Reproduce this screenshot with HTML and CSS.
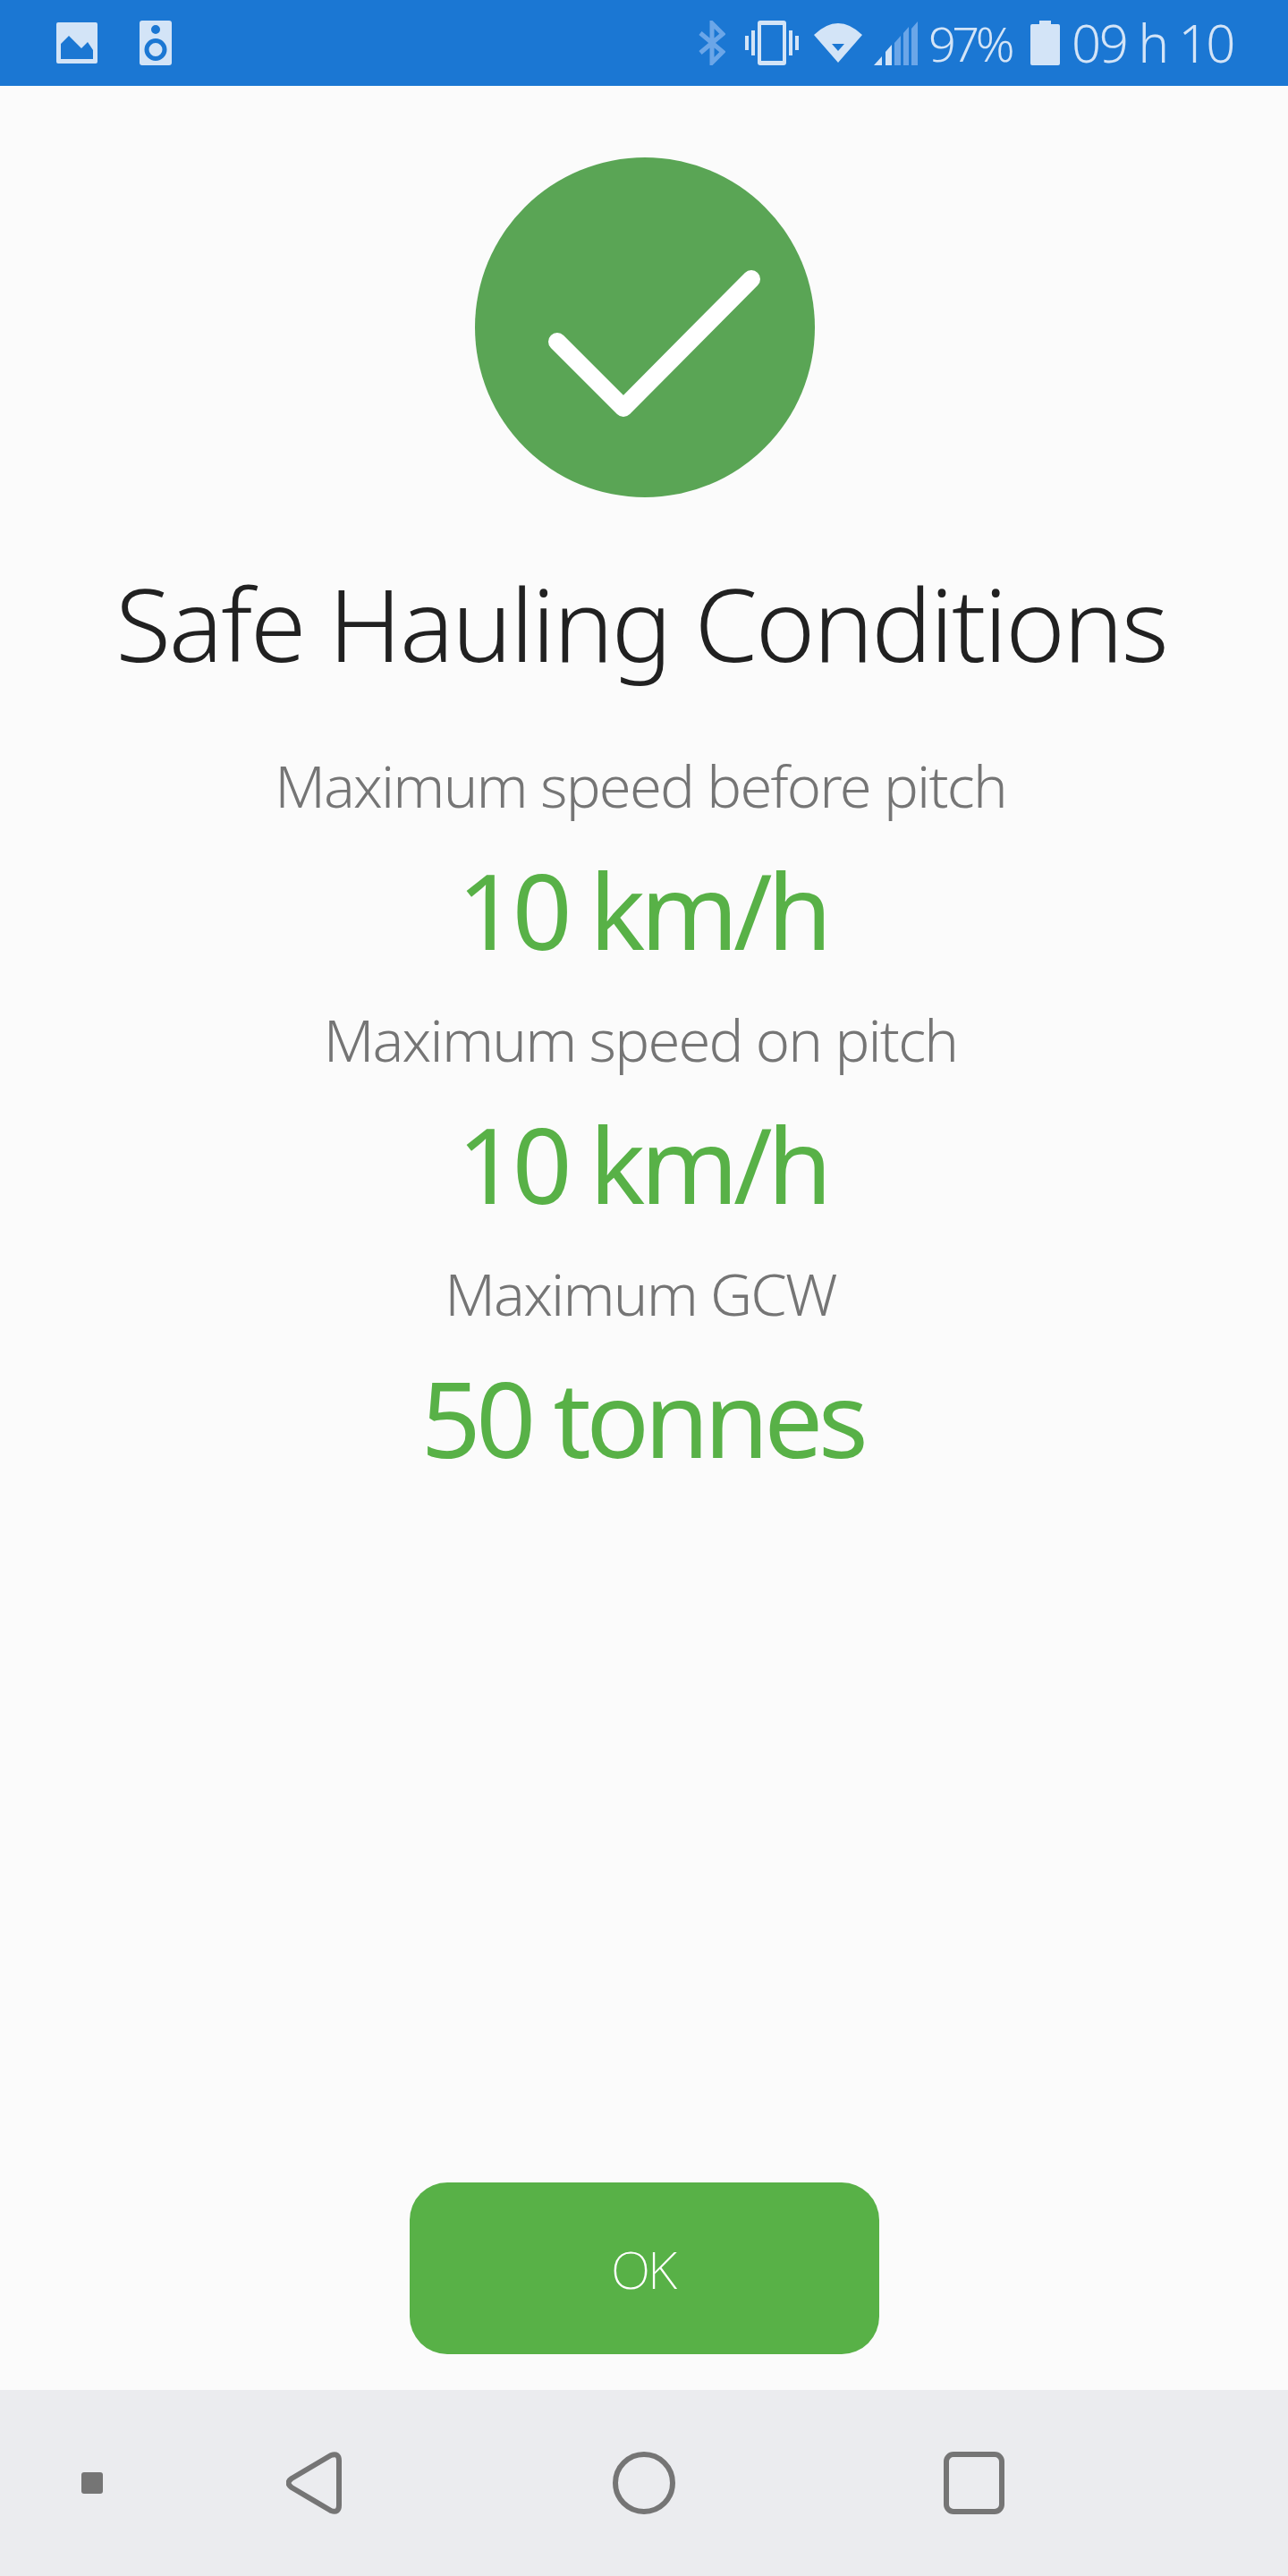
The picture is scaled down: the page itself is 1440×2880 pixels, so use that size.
FILE: index.html
```html
<!DOCTYPE html>
<html lang="en">
<head>
<meta charset="utf-8">
<title>Safe Hauling Conditions</title>
<link rel="stylesheet" href="styles.css">
</head>
<body>
<div class="screen">
  <header class="status">
    <div class="status-left">
      <svg class="i-image" width="46" height="46" viewBox="0 0 46 46"><path fill="#d3e4f7" fill-rule="evenodd" d="M2 0h42a2 2 0 0 1 2 2v42a2 2 0 0 1-2 2H2a2 2 0 0 1-2-2V2a2 2 0 0 1 2-2zM5 41h36V31l-6-9-7 7-14-14-9 9z"/></svg>
      <svg class="i-speaker" width="36" height="50" viewBox="0 0 36 50"><path fill="#d3e4f7" fill-rule="evenodd" d="M3 0h30a3 3 0 0 1 3 3v44a3 3 0 0 1-3 3H3a3 3 0 0 1-3-3V3a3 3 0 0 1 3-3zM18 5a5 5 0 1 0 0 10 5 5 0 0 0 0-10zM18 20a12.500 12.500 0 1 0 0 25 12.500 12.500 0 0 0 0-25zM18 25a7.500 7.500 0 1 1 0 15 7.500 7.500 0 0 1 0-15z"/></svg>
    </div>
    <div class="status-right">
      <svg class="i-bt" width="30" height="50" viewBox="0 0 30 50"><path fill="none" stroke="#6ba6e8" stroke-width="5" d="M2 14l25 21-12 12V3l12 12-25 21"/></svg>
      <svg class="i-vib" width="60" height="50" viewBox="0 0 60 50"><path fill="#d3e4f7" fill-rule="evenodd" d="M17 0h26a3 3 0 0 1 3 3v44a3 3 0 0 1-3 3H17a3 3 0 0 1-3-3V3a3 3 0 0 1 3-3zM18 5v40h24V5zM0 17h4v16H0zM7 11h4v28H7zM49 11h4v28h-4zM56 17h4v16h-4z"/></svg>
      <svg class="i-wifi" width="54" height="44" viewBox="0 0 54 44"><path fill="#d3e4f7" fill-rule="evenodd" d="M0 13Q27-13 54 13L27 44zM20 23h14l-7 8z"/></svg>
      <svg class="i-signal" width="49" height="49" viewBox="0 0 49 49"><path fill="#d3e4f7" d="M0 49l9-10v10zM13 49V34l7-8v23z"/><path fill="#6ba6e8" d="M23 49V24l7-8v33zM33 49V13l6-7v43zM42 49V8l7-8v49z"/></svg>
      <span class="pct">97%</span>
      <svg class="i-batt" width="33" height="50" viewBox="0 0 33 50"><path fill="#d3e4f7" d="M10 0h13v4h8a2 2 0 0 1 2 2v42a2 2 0 0 1-2 2H2a2 2 0 0 1-2-2V6a2 2 0 0 1 2-2h8z"/></svg>
      <span class="time">09 h 10</span>
    </div>
  </header>
  <main class="content">
    <svg class="check" width="380" height="380" viewBox="0 0 380 380"><circle cx="190" cy="190" r="190" fill="#5aa555"/><path fill="none" stroke="#fff" stroke-width="20" stroke-linecap="round" stroke-linejoin="round" d="M92 206l74 74L309 136"/></svg>
    <h1 class="title">Safe Hauling Conditions</h1>
    <div class="metrics">
      <p class="label">Maximum speed before pitch</p>
      <p class="value">10 km/h</p>
      <p class="label">Maximum speed on pitch</p>
      <p class="value">10 km/h</p>
      <p class="label">Maximum GCW</p>
      <p class="value">50 tonnes</p>
    </div>
    <button class="ok">OK</button>
  </main>
  <nav class="nav">
    <svg class="n-dot" width="24" height="24" viewBox="0 0 24 24"><rect width="24" height="24" rx="3" fill="#757575"/></svg>
    <svg class="n-back" width="62" height="70" viewBox="0 0 62 70"><path fill="none" stroke="#757575" stroke-width="6" stroke-linejoin="round" d="M6 30L50 4q9-3 9 6v50q0 9-9 6L6 40q-7-5 0-10z"/></svg>
    <svg class="n-home" width="70" height="70" viewBox="0 0 70 70"><circle cx="35" cy="35" r="32" fill="none" stroke="#757575" stroke-width="6"/></svg>
    <svg class="n-recent" width="68" height="70" viewBox="0 0 68 70"><rect x="3" y="3" width="62" height="64" rx="8" fill="none" stroke="#757575" stroke-width="6"/></svg>
  </nav>
</div>
</body>
</html>
```

FILE: styles.css
```css
html, body { margin: 0; padding: 0; }
body { font-family: "Noto Sans", sans-serif; background: #fbfbfb; }
.screen { width: 1440px; height: 2880px; display: flex; flex-direction: column; }
.status { height: 96px; flex: none; background: #1b77d3; display: flex; justify-content: space-between; align-items: center; box-sizing: border-box; padding: 0 62px 0 63px; color: #d3e4f7; }
.status-left, .status-right { display: flex; align-items: center; }
.status-left { gap: 47px; }
.status-left svg, .status-right svg { display: block; }
.i-vib { margin-left: 22px; }
.i-wifi { margin-left: 17px; }
.i-signal { margin-left: 13px; }
.pct { margin-left: 12px; width: 97px; white-space: nowrap; font-size: 54px; font-weight: 300; letter-spacing: -4.500px; line-height: 1; }
.i-batt { margin-left: 17px; }
.time { margin-left: 13px; width: 180px; white-space: nowrap; font-size: 58px; font-weight: 300; letter-spacing: -2.3px; line-height: 1; }
.content { flex: 1; display: flex; flex-direction: column; align-items: center; }
.check { margin-top: 80px; margin-left: 2px; display: block; flex: none; }
.title { margin: 70px 6px 0 0; font-size: 113px; line-height: 140px; font-weight: 300; color: #212121; letter-spacing: -2.2px; }
.metrics { margin-top: 70px; display: flex; flex-direction: column; align-items: center; }
.label { margin: 0 8px 0 0; font-size: 65px; line-height: 84px; font-weight: 300; color: #757575; letter-spacing: -1.8px; }
.value { margin: 3px 4px 9px 0; font-size: 117px; line-height: 188px; height: 188px; font-weight: 400; color: #58b147; letter-spacing: -5.500px; }
.ok { margin-top: auto; margin-bottom: 40px; width: 525px; height: 192px; border: 0; border-radius: 42px; background: #58b147; color: #fff; font-family: inherit; font-size: 58px; font-weight: 200; letter-spacing: -3px; text-indent: -3px; display: block; flex: none; }
.nav { height: 208px; flex: none; background: #ebecef; position: relative; display: flex; align-items: center; }
.n-dot { margin-left: 91px; }
.n-back { margin-left: 205px; }
.n-home { margin-left: 303px; }
.n-recent { margin-left: 300px; }
```
